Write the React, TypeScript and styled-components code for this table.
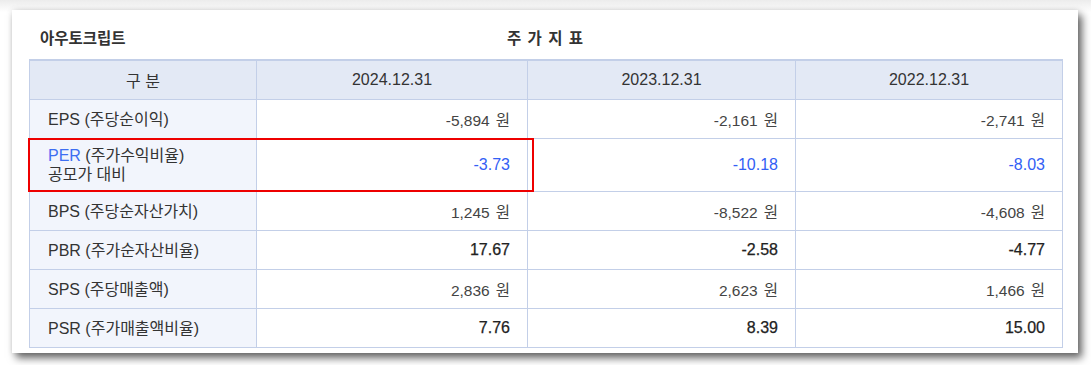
import React from "react";
import styled, { createGlobalStyle } from "styled-components";

const GlobalStyle = createGlobalStyle`
  html, body {
    margin: 0;
    padding: 0;
    background: #ffffff;
  }
  body {
    font-family: "Liberation Sans", "Noto Sans CJK KR", sans-serif;
  }
`;

type Cell = {
  value: string;
  unit?: boolean;
  strong?: boolean;
};

type Row = {
  code: string;
  name: string;
  sub?: string;
  highlight?: boolean;
  cells: Cell[];
};

const dates = ["2024.12.31", "2023.12.31", "2022.12.31"];

const rows: Row[] = [
  {
    code: "EPS",
    name: "(주당순이익)",
    cells: [
      { value: "-5,894", unit: true },
      { value: "-2,161", unit: true },
      { value: "-2,741", unit: true },
    ],
  },
  {
    code: "PER",
    name: "(주가수익비율)",
    sub: "공모가 대비",
    highlight: true,
    cells: [{ value: "-3.73" }, { value: "-10.18" }, { value: "-8.03" }],
  },
  {
    code: "BPS",
    name: "(주당순자산가치)",
    cells: [
      { value: "1,245", unit: true },
      { value: "-8,522", unit: true },
      { value: "-4,608", unit: true },
    ],
  },
  {
    code: "PBR",
    name: "(주가순자산비율)",
    cells: [
      { value: "17.67", strong: true },
      { value: "-2.58", strong: true },
      { value: "-4.77", strong: true },
    ],
  },
  {
    code: "SPS",
    name: "(주당매출액)",
    cells: [
      { value: "2,836", unit: true },
      { value: "2,623", unit: true },
      { value: "1,466", unit: true },
    ],
  },
  {
    code: "PSR",
    name: "(주가매출액비율)",
    cells: [
      { value: "7.76", strong: true },
      { value: "8.39", strong: true },
      { value: "15.00", strong: true },
    ],
  },
];

function App() {
  return (
    <Page>
      <GlobalStyle />
      <Card>
        <TitleRow>
          <Company>아우토크립트</Company>
          <Heading>주 가 지 표</Heading>
          <span />
        </TitleRow>
        <Table>
          <colgroup>
            <col style={{ width: 227 }} />
            <col style={{ width: 271 }} />
            <col style={{ width: 268 }} />
            <col style={{ width: 267 }} />
          </colgroup>
          <thead>
            <tr>
              <HeadCell>구 분</HeadCell>
              {dates.map((d) => (
                <HeadCell key={d}>{d}</HeadCell>
              ))}
            </tr>
          </thead>
          <tbody>
            {rows.map((row) => (
              <BodyRow key={row.code} tall={!!row.sub}>
                <LabelCell>
                  <LabelWrap boxed={!!row.highlight}>
                    <div>
                      <Code blue={!!row.highlight}>{row.code}</Code> {row.name}
                    </div>
                    {row.sub && <div>{row.sub}</div>}
                  </LabelWrap>
                </LabelCell>
                {row.cells.map((c, i) => (
                  <ValueCell
                    key={i}
                    blue={!!row.highlight}
                    strong={!!c.strong}
                  >
                    {c.value}
                    {c.unit && <Unit>원</Unit>}
                  </ValueCell>
                ))}
              </BodyRow>
            ))}
          </tbody>
        </Table>
      </Card>
    </Page>
  );
}

const Page = styled.div`
  padding: 10px 13px 12px 12px;
  background: linear-gradient(#ececec, #ffffff 12px);
`;

const Card = styled.div`
  width: 1066px;
  height: 343px;
  box-sizing: border-box;
  background: #ffffff;
  padding: 0 16px 0 17px;
  box-shadow: 4px 5px 8px rgba(0, 0, 0, 0.6), 0 0 6px rgba(0, 0, 0, 0.1);
`;

const TitleRow = styled.div`
  display: grid;
  grid-template-columns: 1fr auto 1fr;
  align-items: center;
  height: 49px;
  padding-top: 5px;
  box-sizing: border-box;
`;

const Company = styled.div`
  padding-left: 11px;
  font-size: 15.5px;
  font-weight: bold;
  color: #333333;
`;

const Heading = styled.div`
  font-size: 15.5px;
  font-weight: bold;
  color: #333333;
  letter-spacing: 1px;
`;

const Table = styled.table`
  width: 1033px;
  border-collapse: collapse;
  table-layout: fixed;
  font-size: 16px;
  color: #333333;
`;

const HeadCell = styled.th`
  height: 38px;
  padding: 0;
  background: #e3e9f5;
  border: 1px solid #c3cfe8;
  border-top: 2px solid #c3cfe8;
  font-weight: normal;
  text-align: center;
  color: #333333;
`;

const BodyRow = styled.tr<{ tall: boolean }>`
  height: ${(p) => (p.tall ? "53px" : "39px")};
`;

const LabelCell = styled.td`
  position: relative;
  padding: 0 0 0 18px;
  background: #f2f5fc;
  border: 1px solid #c3cfe8;
  line-height: 19px;
  color: #333333;
`;

const LabelWrap = styled.div<{ boxed: boolean }>`
  &::after {
    content: "";
    display: ${(p) => (p.boxed ? "block" : "none")};
    position: absolute;
    left: -2px;
    top: -1px;
    width: 502px;
    height: 50px;
    border: 2px solid #ee0000;
    pointer-events: none;
    z-index: 2;
  }
`;

const Code = styled.span<{ blue: boolean }>`
  color: ${(p) => (p.blue ? "#3d6ef2" : "#333333")};
`;

const ValueCell = styled.td<{ blue: boolean; strong: boolean }>`
  padding: 0 17px 0 0;
  border: 1px solid #c3cfe8;
  text-align: right;
  background: #ffffff;
  color: ${(p) => (p.blue ? "#3260f5" : p.strong ? "#222222" : "#444444")};
  font-size: ${(p) => (p.strong || p.blue ? "16px" : "15.5px")};
  -webkit-text-stroke: ${(p) => (p.strong ? "0.25px #222222" : "0")};
`;

const Unit = styled.span`
  margin-left: 6px;
`;

export default App;
